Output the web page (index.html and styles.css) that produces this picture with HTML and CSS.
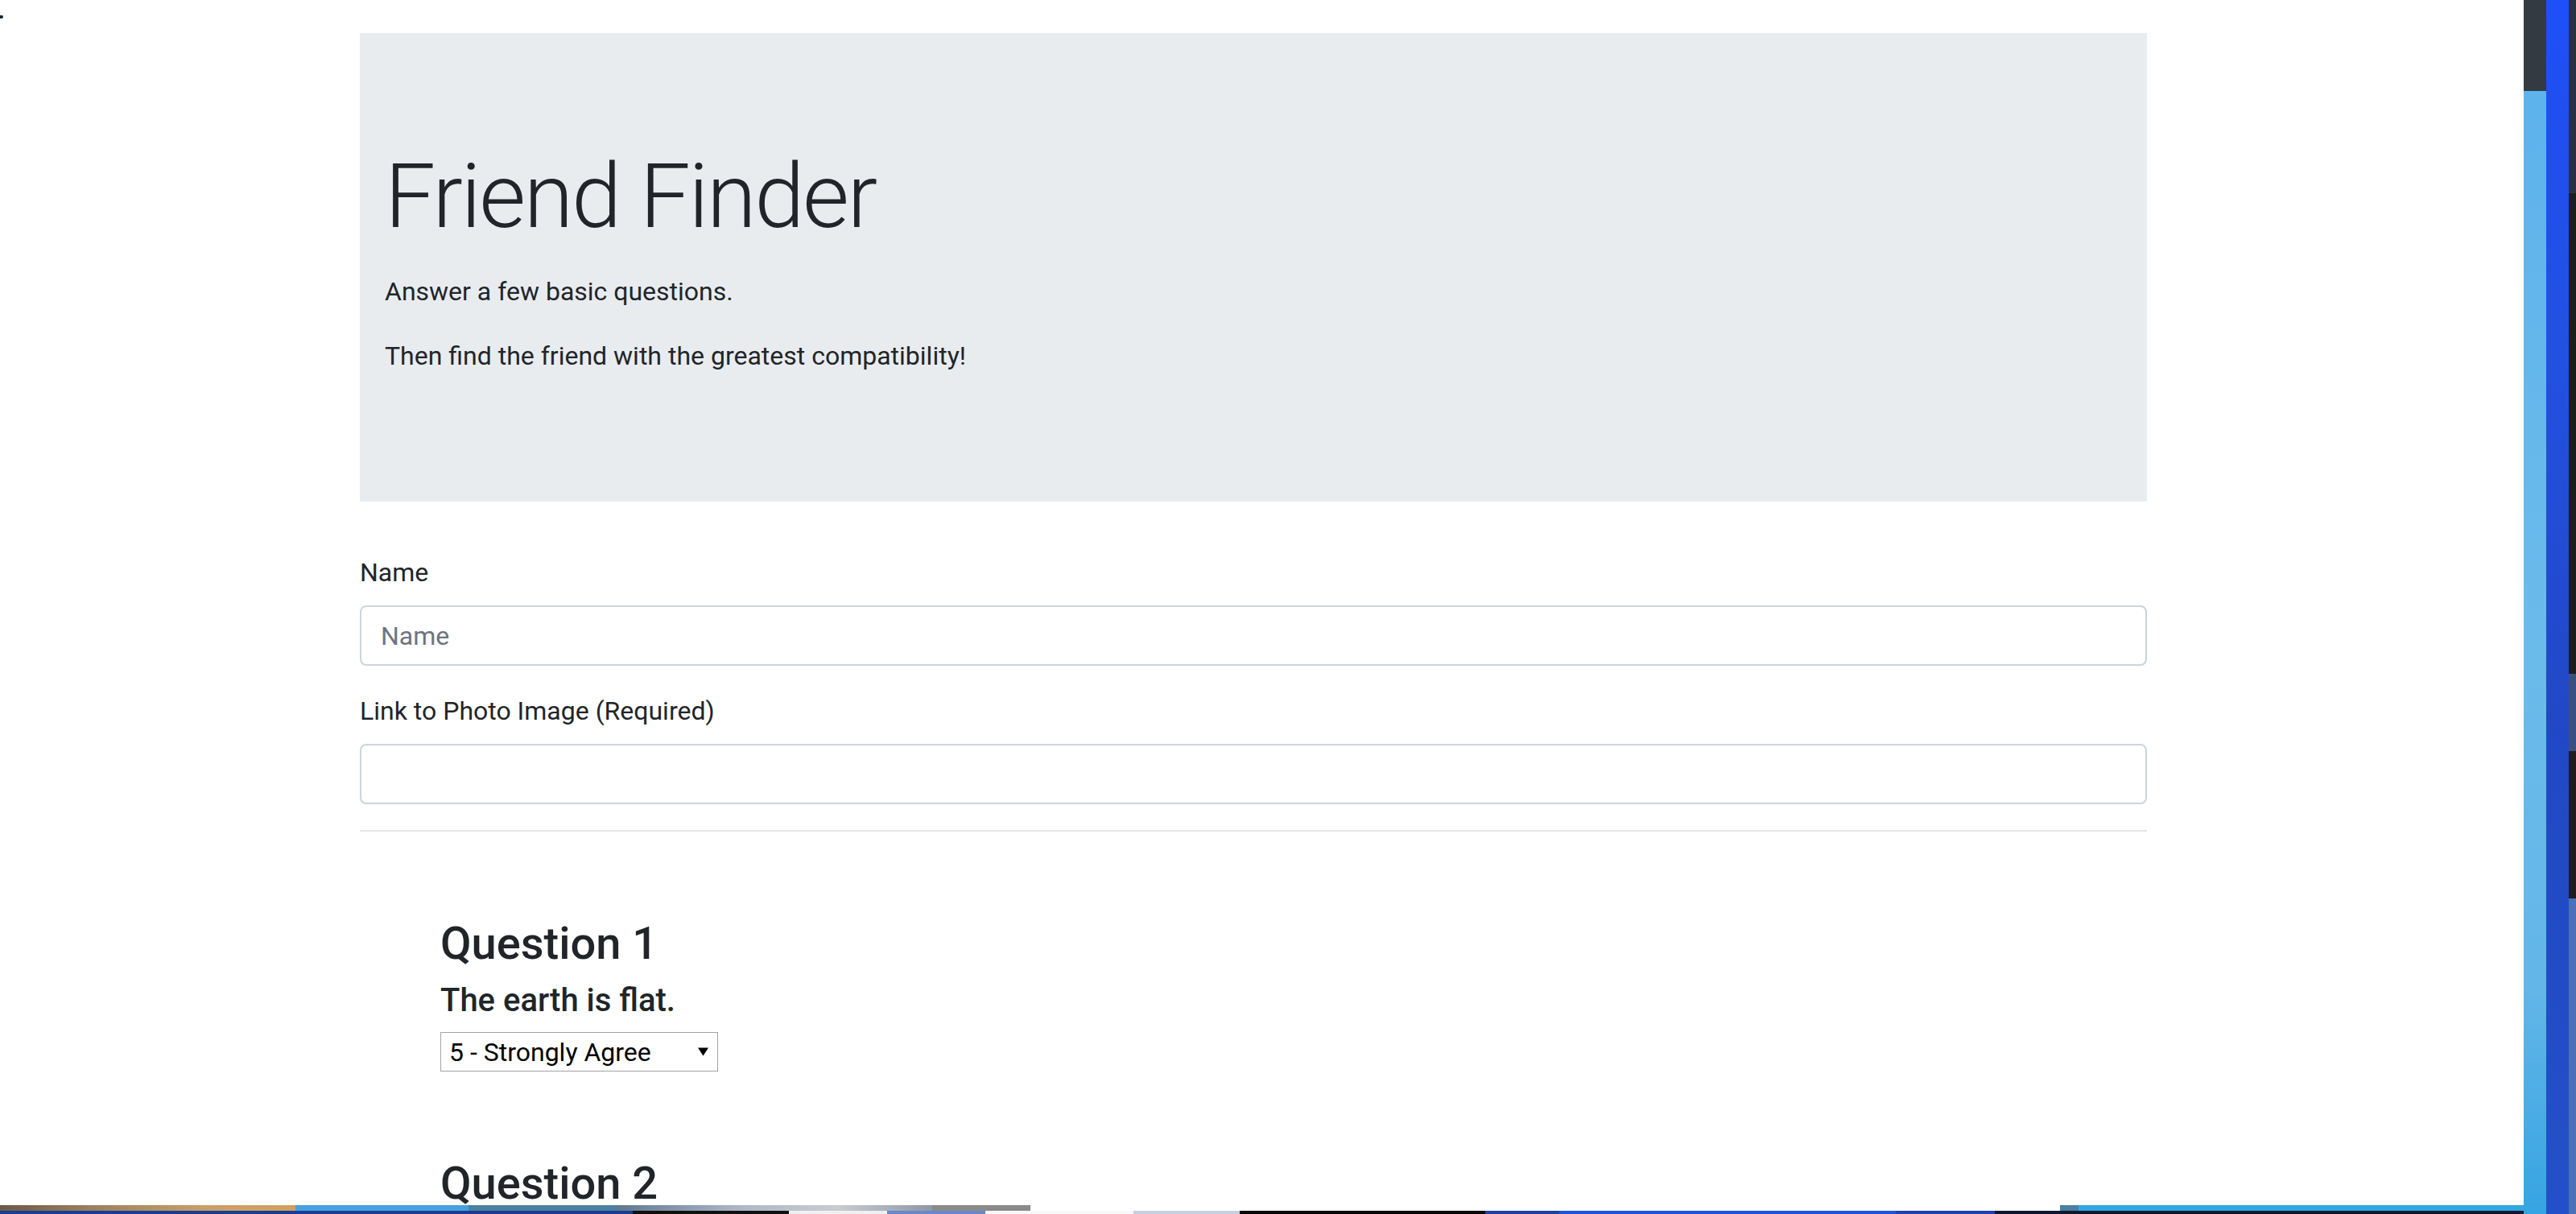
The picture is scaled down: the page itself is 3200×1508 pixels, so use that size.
FILE: index.html
```html
<!DOCTYPE html>
<html lang="en">
<head>
<meta charset="utf-8">
<title>Friend Finder</title>
<link rel="stylesheet" href="styles.css">
</head>
<body>
<div class="page">
  <span class="cursor-dot"></span>
  <div class="container">
    <header class="jumbotron">
      <h1 class="display">Friend Finder</h1>
      <p>Answer a few basic questions.</p>
      <p>Then find the friend with the greatest compatibility!</p>
    </header>
    <form class="survey">
      <div class="form-group">
        <label for="name">Name</label>
        <input id="name" class="form-control" type="text" placeholder="Name">
      </div>
      <div class="form-group">
        <label for="photo">Link to Photo Image (Required)</label>
        <input id="photo" class="form-control" type="text">
      </div>
      <hr>
      <div class="questions">
        <div class="question">
          <h3>Question 1</h3>
          <h5>The earth is flat.</h5>
          <div class="select-wrap">
            <select class="answer">
              <option>5 - Strongly Agree</option>
              <option>4</option>
              <option>3</option>
              <option>2</option>
              <option>1 - Strongly Disagree</option>
            </select>
            <svg class="select-arrow" viewBox="0 0 13 10" width="13" height="11"><path d="M0 0H13L6.5 10Z" fill="#000"/></svg>
          </div>
        </div>
        <div class="question">
          <h3>Question 2</h3>
        </div>
      </div>
    </form>
  </div>
</div>
<div class="band-top">
  <span class="seg t1"></span><span class="seg t2"></span><span class="seg t3"></span><span class="seg t4"></span><span class="seg t5"></span><span class="seg t6"></span><span class="seg t7"></span><span class="seg t8"></span>
</div>
<div class="band-bottom">
  <span class="seg b1"></span><span class="seg b2"></span><span class="seg b3"></span><span class="seg b4"></span><span class="seg b5"></span><span class="seg b6"></span><span class="seg b7"></span><span class="seg b8"></span><span class="seg b9"></span><span class="seg b10"></span><span class="seg b11"></span>
</div>
<div class="strip strip1"><span class="strip1-top"></span><span class="strip1-rest"></span></div>
<div class="strip strip2"></div>
<div class="strip strip3"></div>
</body>
</html>
```
FILE: styles.css
```css
html, body {
  margin: 0;
  padding: 0;
}

body {
  width: 3200px;
  height: 1508px;
  overflow: hidden;
  display: grid;
  grid-template-columns: 3135px 28px 28px 9px;
  grid-template-rows: 1497px 7px 4px;
  font-family: Roboto, "Liberation Sans", sans-serif;
  color: #212529;
  background: #fff;
}

.page {
  grid-column: 1;
  grid-row: 1;
  position: relative;
  overflow: hidden;
  background: #fff;
}

.cursor-dot {
  position: absolute;
  left: 0;
  top: 19px;
  width: 4px;
  height: 4px;
  background: #1d2433;
  border-radius: 0 2px 2px 0;
}

.container {
  width: 2220px;
  margin-left: 447px;
}

.jumbotron {
  margin-top: 41px;
  background: #e9ecef;
  padding: 136px 31px 120px;
  height: 582px;
  box-sizing: border-box;
}

.display {
  margin: 0 0 27px;
  font-size: 112px;
  font-weight: 300;
  line-height: 1.2;
  letter-spacing: -2.4px;
}

.jumbotron p {
  margin: 0 0 32px;
  font-size: 32px;
  line-height: 48px;
}

.survey {
  margin-top: 64px;
}

.form-group {
  margin-bottom: 32px;
}

.form-group label {
  display: block;
  font-size: 32px;
  line-height: 48px;
  margin-bottom: 17px;
}

.form-control {
  display: block;
  width: 100%;
  box-sizing: border-box;
  height: 75px;
  padding: 12px 24px;
  font-family: inherit;
  font-size: 32px;
  color: #495057;
  background: #fff;
  border: 2px solid #ced4da;
  border-radius: 8px;
  outline: none;
}

.form-control::placeholder {
  color: #6c757d;
}

hr {
  margin: 3px 0 0;
  border: 0;
  border-top: 2px solid rgba(0, 0, 0, 0.1);
  height: 0;
}

.questions {
  padding-left: 100px;
  padding-top: 106px;
}

.question h3 {
  margin: 0 0 13px;
  font-size: 56px;
  font-weight: 500;
  line-height: 67px;
}

.question h5 {
  margin: 0 0 15px;
  font-size: 40px;
  font-weight: 500;
  line-height: 48px;
}

.question + .question {
  margin-top: 106px;
}

.select-wrap {
  position: relative;
  width: 345px;
  height: 49px;
}

.answer {
  -webkit-appearance: none;
  appearance: none;
  display: block;
  width: 345px;
  height: 49px;
  box-sizing: border-box;
  margin: 0;
  padding: 0 0 0 10px;
  font-family: inherit;
  font-size: 32px;
  color: #000;
  background: #fff;
  border: 1px solid #a3a3a3;
  border-radius: 0;
}

.select-arrow {
  position: absolute;
  left: 320px;
  top: 19px;
  pointer-events: none;
}

/* desktop artifacts around the window */
.band-top, .band-bottom {
  grid-column: 1;
  display: flex;
}
.band-top { grid-row: 2; }
.band-bottom { grid-row: 3; }

.seg { display: block; height: 100%; flex: none; }

.t1 { width: 367px; background: linear-gradient(90deg, #6a5a48, #9a8060 30%, #c8a068 70%, #d0a060); }
.t2 { width: 215px; background: #48a0e0; }
.t3 { width: 183px; background: #4a80a0; }
.t4 { width: 393px; background: linear-gradient(90deg, #607890, #b0b8c8 40%, #c8ccd0 70%, #9098a8); }
.t5 { width: 122px; background: #8a8a8a; }
.t6 { width: 1279px; background: #fff; }
.t7 { width: 23px; background: #4a80a0; }
.t8 { width: 553px; background: #30a8e0; }

.b1 { width: 786px; background: #1c3c90; }
.b2 { width: 194px; background: #101010; }
.b3 { width: 122px; background: #f0f0f0; }
.b4 { width: 122px; background: #6a88c8; }
.b5 { width: 184px; background: #f8f8f8; }
.b6 { width: 132px; background: #c8d0e0; }
.b7 { width: 305px; background: #080808; }
.b8 { width: 92px; background: #2040a0; }
.b9 { width: 418px; background: #2050e0; }
.b10 { width: 123px; background: #2040b0; }
.b11 { width: 657px; background: #101830; }

.strip { grid-row: 1 / 4; }

.strip1 {
  grid-column: 2;
  display: flex;
  flex-direction: column;
}
.strip1-top { display: block; height: 113px; background: #343a41; flex: none; }
.strip1-rest { display: block; flex: 1; background: linear-gradient(180deg, #5db3ec, #6bbbea 50%, #62b6e8 80%, #36a4e2); }

.strip2 {
  grid-column: 3;
  background: linear-gradient(180deg, #1f4ff8, #2250e0 30%, #2148c4 60%, #2350c8);
}

.strip3 {
  grid-column: 4;
  background: linear-gradient(180deg, #2a3048 0, #2a3048 240px, #1e1c20 240px, #1e1c20 837px, #3a5080 837px, #3a5080 933px, #1e1c20 933px, #1e1c20 1116px, #4a70b8 1116px);
}
```
